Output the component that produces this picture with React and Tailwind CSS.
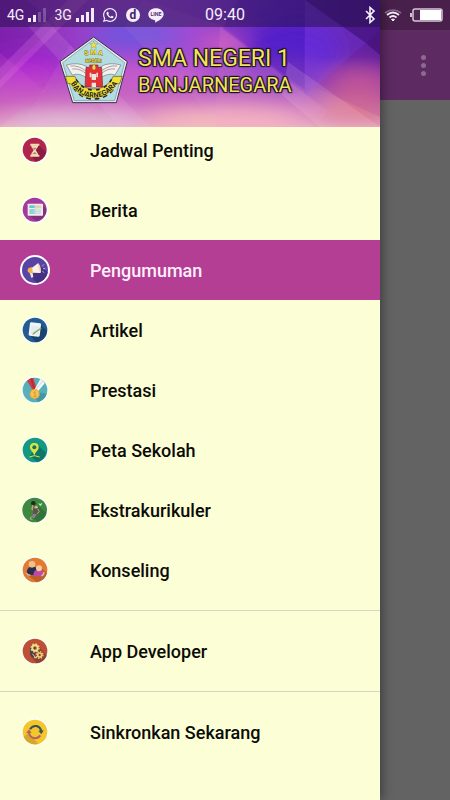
import React from 'react'
import { FaWhatsapp } from 'react-icons/fa'

const HourglassIcon = () => (
    <>
        <circle cx="39" cy="39" r="36" fill="#b3264b" />
        <path d="M51 26 73 46a36 36 0 0 1-32 29L28 56z" fill="#8c1d42" />
        <path d="M29 26h20v4l-7 10 7 11v5H29v-5l7-11-7-10z" fill="#efd9c8" />
        <path d="M33 33h12l-6 7zM32 52l7-6 7 6z" fill="#c4803d" />
        <path d="M26 21h27v6H26zM26 54h27v6H26z" fill="#f2dcae" />
    </>
)

const NewsIcon = () => (
    <>
        <circle cx="39" cy="39" r="36" fill="#a53a9c" />
        <path d="M62 25 74 36a36 36 0 0 1-29 38L21 56z" fill="#82307f" />
        <rect x="18" y="21" width="46" height="36" rx="2" fill="#f3eee9" />
        <rect x="23" y="26" width="16" height="8" fill="#67c5cc" />
        <path d="M23 37h16v15H23z" fill="#8fd4d8" />
        <path d="M43 26h16v9H43z" fill="#e3d0b5" />
        <path d="M43 40h16M43 45h16M43 50h16M41 25v28" stroke="#9ccfd2" strokeWidth="2" />
    </>
)

const MegaphoneIcon = () => (
    <>
        <circle cx="40" cy="40" r="45" fill="#ffffff" />
        <circle cx="40" cy="40" r="39" fill="#5844a4" />
        <path d="M51 24 78 47a39 39 0 0 1-32 32L24 55z" fill="#443182" />
        <path d="M30 34 49 20l7 29-25-1z" fill="#fff4e8" />
        <path d="M49 19c6 5 11 18 8 31-5-6-10-21-8-31z" fill="#f9d9b3" />
        <path d="M18 41c0-7 5-8 13-9l3 17c-8 2-16 1-16-8z" fill="#f0b34e" />
        <path d="M24 49h9l2 13-6 1z" fill="#e6e5ed" />
        <path d="m61 29 6-6M64 36h7M62 44l6 4" stroke="#b3a6ec" strokeWidth="3" />
    </>
)

const ArticleIcon = () => (
    <>
        <circle cx="40" cy="40" r="37" fill="#235c91" />
        <path d="M55 23 76 42a37 37 0 0 1-34 35L27 57z" fill="#1a436f" />
        <path d="m29 17 26 3q4 1 3 5l-4 32q-1 4-5 3l-25-3q-4-1-3-5l4-32q1-4 4-3z" fill="#f1f5f9" />
        <path d="m29 27 24 3-3 25-24-3z" fill="#e6ebf0" />
        <path d="m36 50 23-16" stroke="#82b346" strokeWidth="4" />
        <path d="m32 54 3-5 3 3z" fill="#687279" />
    </>
)

const MedalIcon = () => (
    <>
        <circle cx="40" cy="40" r="37" fill="#57b0b8" />
        <path d="M47 47 75 51a37 37 0 0 1-25 25L31 55z" fill="#3f98a3" />
        <path d="M16 12q8-7 19-9l10 33-10 7z" fill="#cf3c45" />
        <path d="M26 6l5-2 10 35-4 2z" fill="#b32b38" />
        <path d="M56 7q9 4 13 13L48 45l-10-6z" fill="#f6fafb" />
        <path d="m62 10 4 3-22 28-4-2z" fill="#dbe4e9" />
        <circle cx="39" cy="52" r="15" fill="#f3ac3a" />
        <circle cx="39" cy="52" r="11" fill="#f7c454" />
        <path d="m35 49 5-4v14m-4 0h8" fill="none" stroke="#d88e31" strokeWidth="3" />
    </>
)

const PinIcon = () => (
    <>
        <circle cx="40" cy="40" r="37" fill="#169780" />
        <path d="M47 24 73 48a37 37 0 0 1-26 28L25 58z" fill="#0d7668" />
        <path d="M38 19c-9 0-14 6-13 14 1 8 9 11 13 24 4-13 12-16 13-24 1-8-4-14-13-14z" fill="#d6e543" />
        <circle cx="38" cy="32" r="6" fill="#19705d" />
        <path d="M23 61q15-8 31 0" fill="none" stroke="#d6e543" strokeWidth="3" />
    </>
)

const SportIcon = () => (
    <>
        <circle cx="39" cy="40" r="37" fill="#3f893f" />
        <path d="M49 26 74 49a37 37 0 0 1-25 26L28 62z" fill="#32733a" />
        <circle cx="35" cy="20" r="7" fill="#202c22" />
        <path d="m34 25-3 12 7 5" fill="none" stroke="#d39c75" strokeWidth="4" />
        <circle cx="44" cy="32" r="5" fill="#ddb28d" />
        <path d="m34 36 16-1-1 16-14 1z" fill="#5b534f" />
        <path d="m35 51 11 1-8 13-10-3z" fill="#927898" />
        <path d="m29 60-4 7 7 1M48 37l5 8-7 6" fill="none" stroke="#d69f82" strokeWidth="3" />
        <path d="m50 19 6 3 6-4-4 10-5-3z" fill="#c9ecd3" />
    </>
)

const CounselIcon = () => (
    <>
        <circle cx="40" cy="40" r="37" fill="#e27a30" />
        <path d="m54 30 22 18a37 37 0 0 1-31 28L20 57z" fill="#be5e2b" />
        <path d="M15 54q-1-20 11-23h14q9 4 7 24z" fill="#262e4e" />
        <circle cx="31" cy="23" r="10" fill="#efc18f" />
        <path d="M35 58q0-15 9-18h15q9 6 8 15l-7 4z" fill="#bd4aaa" />
        <circle cx="52" cy="35" r="9" fill="#f4cb9a" />
        <path d="M14 48q4 9 12 7M67 46q0 9-8 12" fill="none" stroke="#efc18f" strokeWidth="4" />
    </>
)

const GearsIcon = () => (
    <>
        <circle cx="40" cy="40" r="37" fill="#bd5034" />
        <path d="m51 27 24 27a37 37 0 0 1-30 23L27 55V29z" fill="#8f4232" />
        <path d="M25 26v24l6 9 9-3V28z" fill="#4c3e48" />
        <circle cx="40" cy="31" r="8" fill="none" stroke="#f4dc84" strokeWidth="6" />
        <circle cx="40" cy="31" r="12" fill="none" stroke="#f4dc84" strokeWidth="4" strokeDasharray="5 4.42" />
        <circle cx="54" cy="52" r="6" fill="none" stroke="#f1d173" strokeWidth="5" />
        <circle cx="54" cy="52" r="10" fill="none" stroke="#f1d173" strokeWidth="4" strokeDasharray="4 3.85" />
        <path d="m32 48 9 11M37 60h9" stroke="#d9d2b0" strokeWidth="3" />
    </>
)

const SyncIcon = () => (
    <>
        <circle cx="40" cy="40" r="37" fill="#f4c62c" />
        <path d="M20 43 50 76A37 37 0 0 1 6 54z" fill="#d7a72b" />
        <path d="M25 32q7-12 20-10 11 3 14 15" fill="none" stroke="#385553" strokeWidth="6" />
        <path d="m50 36 16-1-7 12z" fill="#385553" />
        <path d="M56 50q-8 11-20 8-12-3-14-16" fill="none" stroke="#b46165" strokeWidth="6" />
        <path d="m13 43 9-11 8 11z" fill="#b46165" />
    </>
)

const menuList = [
    { id: 1, name: 'Jadwal Penting', icon: HourglassIcon },
    { id: 2, name: 'Berita', icon: NewsIcon },
    { id: 3, name: 'Pengumuman', icon: MegaphoneIcon, active: true },
    { id: 4, name: 'Artikel', icon: ArticleIcon },
    { id: 5, name: 'Prestasi', icon: MedalIcon },
    { id: 6, name: 'Peta Sekolah', icon: PinIcon },
    { id: 7, name: 'Ekstrakurikuler', icon: SportIcon },
    { id: 8, name: 'Konseling', icon: CounselIcon },
]

const MenuItem = ({ item }) => {
    const Icon = item.icon
    return (
        <a
            href="#"
            aria-current={item.active ? 'page' : undefined}
            className={`flex h-[60px] items-center gap-10 pl-5 text-lg font-medium ${item.active ? 'bg-[#b33e94] text-[#fff0fb]' : 'text-[#0b0b08]'}`}
        >
            <svg viewBox="-5 -5 90 90" className="size-[30px] shrink-0" aria-hidden="true">
                <circle cx="40" cy="40" r="41" fill="#fbfffa" />
                <Icon />
            </svg>
            <span className="pt-0.5">{item.name}</span>
        </a>
    )
}

const Signal = ({ weak }) => (
    <svg viewBox="0 0 18 14" className="h-3.5 w-[18px]" fill="#f3eaf8" aria-hidden="true">
        <path d="M0 10h3v4H0zM5 7h3v7H5z" />
        <path d="M10 4h3v10h-3zM15 0h3v14h-3z" opacity={weak ? 0.25 : 1} />
    </svg>
)

const StatusBar = () => (
    <div className="absolute inset-x-0 top-0 z-30 grid h-[30px] grid-cols-[1fr_auto_1fr] items-center px-[7px] text-[#f6effa]">
        <div className="flex items-center gap-2 text-sm">
            <div className="flex items-center gap-1">
                <span>4G</span>
                <Signal weak />
            </div>
            <div className="flex items-center gap-1">
                <span>3G</span>
                <Signal />
            </div>
            <FaWhatsapp className="size-4" />
            <span className="flex size-3.5 items-center justify-center rounded-full bg-[#f6effa] text-xs leading-none font-bold text-[#43226b]">d</span>
            <svg viewBox="0 0 48 45" className="h-[15px] w-4" aria-label="LINE">
                <path d="M24 1C10 1 1 9 1 19c0 9 7 15 17 17 5 1 4 3 3 8 9-3 26-14 26-25C47 9 37 1 24 1z" fill="#f6effa" />
                <text x="24" y="25" textAnchor="middle" fontSize="16" fontWeight="700" fill="#573079">LINE</text>
            </svg>
        </div>
        <span className="text-base">09:40</span>
        <div className="flex items-center justify-end gap-2">
            <svg viewBox="0 0 12 18" className="h-[18px] w-3" fill="none" stroke="#f6effa" strokeWidth="1.6" aria-hidden="true">
                <path d="m2 5 8 8-4 3.5v-15L10 5l-8 8" />
            </svg>
            <svg viewBox="0 0 18 14" className="h-3.5 w-[18px]" fill="none" stroke="#f3eaf5" strokeWidth="1.7" aria-hidden="true">
                <path d="M1 5q8-6 16 0" opacity=".35" />
                <path d="M3 7q6-5 12 0M5.500 9.500q3.500-3 7 0" />
                <path d="m7.500 11.500 1.500 1.500 1.500-1.500q-1.500-1-3 0z" fill="#f3eaf5" strokeWidth="1" />
            </svg>
            <svg viewBox="0 0 33 14" className="h-3.5 w-[33px]" aria-hidden="true">
                <path d="M1 5v4" stroke="#cfbdd2" strokeWidth="2" />
                <rect x="3" y="1" width="29" height="12" rx="2" fill="#4e2853" stroke="#d6c5d9" strokeWidth="1.500" />
                <path d="M10 2h21v10H10z" fill="#ffffff" />
            </svg>
        </div>
    </div>
)

const SchoolLogo = () => (
    <svg viewBox="26 12 210 204" className="h-[68px] w-[70px] shrink-0" role="img" aria-label="SMA Negeri Banjarnegara">
        <path d="m130 15 101 74-33 123H67L29 89z" fill="#eee9ee" stroke="#35304b" strokeWidth="3" strokeLinejoin="round" />
        <path d="m130 22 93 70-30 114H72L37 92z" fill="#b3dce1" stroke="#698e9f" strokeWidth="2" />
        <path d="m130 27 3 8h9l-7 5 3 9-8-5-8 5 3-9-7-5h9z" fill="#f8e53a" stroke="#807737" />
        <defs>
            <path id="arcTop" d="M88 74q42-12 84 0" />
            <path id="arcMid" d="M88 93q42-4 84 0" />
            <path id="arcRibbon" d="M56 146Q84 197 130 197Q177 197 207 146" />
        </defs>
        <g fontWeight="700" fill="#f7e538" stroke="#64613a" strokeWidth="2" paintOrder="stroke" textAnchor="middle">
            <text fontSize="20"><textPath href="#arcTop" startOffset="50%">S M A</textPath></text>
            <text fontSize="14"><textPath href="#arcMid" startOffset="50%">NEGERI</textPath></text>
        </g>
        <g fill="#f4f1ed" stroke="#777684" strokeWidth="2">
            <path d="M109 104q-25-15-61-5l18 30q22-8 44 10z" />
            <path d="M151 104q25-15 61-5l-18 30q-22-8-44 10z" />
            <path d="M60 102q24-3 47 15M66 111q21-3 40 13M200 102q-24-3-47 15M194 111q-21-3-40 13" fill="none" />
        </g>
        <path d="M107 106h11v-7h25v7h11l3 59h-53z" fill="#e33138" stroke="#822d3c" strokeWidth="2" />
        <path d="M118 122h5v14h-5zM138 122h5v14h-5zM124 126h13v18h-13zM124 152h13v13h-13z" fill="#f1e5d7" />
        <path d="M131 95q-11 15 0 19 10-4 0-19z" fill="#f5df36" stroke="#867735" />
        <path d="M45 133h28q17 38 57 38 41 0 59-38h27l-8 22h-12q-21 40-66 40-46 0-69-40h-9z" fill="#f0df32" stroke="#4d4932" strokeWidth="2" />
        <path d="M70 166q22 34 60 34 39 0 62-34" fill="none" stroke="#28272c" strokeWidth="7" strokeDasharray="14 11" />
        <path d="M77 142q20 32 53 32 35 0 54-32" fill="none" stroke="#28272c" strokeWidth="5" strokeDasharray="11 13" />
        <text fontSize="22" fontWeight="700" fill="#25251d" stroke="#f2e137" strokeWidth="3" paintOrder="stroke" textAnchor="middle">
            <textPath href="#arcRibbon" startOffset="50%">BANJARNEGARA</textPath>
        </text>
    </svg>
)

// abstract triangles behind the school name
const HeaderArt = () => (
    <svg viewBox="0 0 380 127" preserveAspectRatio="none" className="absolute inset-0 size-full" aria-hidden="true">
        <defs>
            <linearGradient id="base" x1="0" y1="0" x2="1" y2="0">
                <stop offset="0" stopColor="#8726b4" />
                <stop offset=".3" stopColor="#a048d0" />
                <stop offset=".5" stopColor="#9442d4" />
                <stop offset=".75" stopColor="#6a2bc8" />
                <stop offset="1" stopColor="#5a1c9a" />
            </linearGradient>
            <linearGradient id="glow" x1="0" y1="0" x2="0" y2="1">
                <stop offset=".45" stopColor="#dc6abb" stopOpacity="0" />
                <stop offset=".8" stopColor="#dc78ba" stopOpacity=".7" />
                <stop offset="1" stopColor="#e8b0c4" />
            </linearGradient>
            <filter id="soft" x="-30%" y="-60%" width="160%" height="220%"><feGaussianBlur stdDeviation="11" /></filter>
        </defs>
        <path d="M0 0h380v127H0z" fill="url(#base)" />
        <g filter="url(#soft)">
            <ellipse cx="25" cy="75" rx="40" ry="25" fill="#a823d4" />
            <ellipse cx="135" cy="35" rx="45" ry="14" fill="#6a55de" />
            <ellipse cx="222" cy="45" rx="26" ry="12" fill="#d052bc" />
            <ellipse cx="295" cy="50" rx="45" ry="28" fill="#5a22d2" />
            <ellipse cx="150" cy="75" rx="60" ry="14" fill="#bf55cf" />
        </g>
        <path d="M0 0h380v127H0z" fill="url(#glow)" />
        <g filter="url(#soft)">
            <ellipse cx="75" cy="124" rx="70" ry="10" fill="#e0c4dc" />
            <ellipse cx="225" cy="121" rx="80" ry="12" fill="#f8bcbc" />
            <ellipse cx="360" cy="85" rx="32" ry="18" fill="#c85898" />
            <ellipse cx="285" cy="72" rx="32" ry="15" fill="#7a35c4" />
            <ellipse cx="355" cy="112" rx="40" ry="12" fill="#e08090" />
        </g>
        <path d="m0 80 55-55-28-25H0z" fill="#53118a" opacity=".2" />
        <path d="m0 53 45 38L0 127z" fill="#e06cd2" opacity=".14" />
        <path d="M0 68 68 0h20L0 88z" fill="#f18ee1" opacity=".2" />
        <path d="m28 26 92 101h30L46 20z" fill="#fac3ef" opacity=".12" />
        <path d="m70 45 45 42-40 40H20z" fill="#f4b0ea" opacity=".08" />
        <path d="m143 0 83 27 96 82-18 18h-81L124 27z" fill="#f0a1d3" opacity=".08" />
        <path d="m220 27 108 84-14 16H215z" fill="#f59fc8" opacity=".13" />
        <path d="M238 0h67v90l-82-62z" fill="#3410a8" opacity=".2" />
        <path d="m305 0 61 43-62 52z" fill="#8a4ae8" opacity=".22" />
        <path d="m305 0 61 43 14-12V0z" fill="#38106e" opacity=".45" />
        <path d="m366 43 14-12v24z" fill="#3a0b62" opacity=".5" />
        <path d="m366 43 14 12v62l-65-30z" fill="#8a2aa0" opacity=".14" />
        <path d="m288 62 92 65h-60l-38-32z" fill="#ffdfed" opacity=".14" />
        <path d="M0 0h380v27H0z" fill="#211045" opacity=".5" />
    </svg>
)

const Drawer = () => (
    <aside className="relative z-20 mr-[70px] min-h-screen bg-[#fcfed5] shadow-[2px_0_10px_rgba(0,0,0,0.4)]">
        <header className="relative z-10 flex h-[127px] items-center overflow-hidden pt-3 pl-[59px]">
            <HeaderArt />
            <div className="relative flex items-center gap-[9px]">
                <SchoolLogo />
                <h1 className="pt-0.5 text-[#f0e45c] [text-shadow:1px_1px_1px_#171020,-1px_1px_1px_#171020,1px_-1px_1px_#171020,-1px_-1px_1px_#171020]">
                    <span className="block text-[23px] leading-7">SMA NEGERI 1</span>
                    <span className="block text-xl leading-6">BANJARNEGARA</span>
                </h1>
            </div>
        </header>
        <nav className="-mt-[7px]">
            {menuList.map((item) => (
                <MenuItem key={item.id} item={item} />
            ))}
            <div className="mt-2.5 border-t border-[#d5d7c2] pt-2.5">
                <MenuItem item={{ name: 'App Developer', icon: GearsIcon }} />
            </div>
            <div className="mt-2.5 border-t border-[#d5d7c2] pt-2.5">
                <MenuItem item={{ name: 'Sinkronkan Sekarang', icon: SyncIcon }} />
            </div>
        </nav>
    </aside>
)

const App = () => {
    return (
        <div className="relative min-h-screen overflow-hidden bg-[#636363] font-['Roboto',sans-serif]">
            <StatusBar />
            <div className="absolute inset-x-0 top-0 flex h-[100px] justify-end border-t-[30px] border-[#49204c] bg-[#5d2a61] pr-[17px]">
                <button type="button" aria-label="Menu" className="flex w-5 flex-col items-center justify-center gap-[3px]">
                    <span className="size-[5px] rounded-full bg-[#8c6b91]"></span>
                    <span className="size-[5px] rounded-full bg-[#8c6b91]"></span>
                    <span className="size-[5px] rounded-full bg-[#8c6b91]"></span>
                </button>
            </div>
            <Drawer />
        </div>
    )
}

export default App
